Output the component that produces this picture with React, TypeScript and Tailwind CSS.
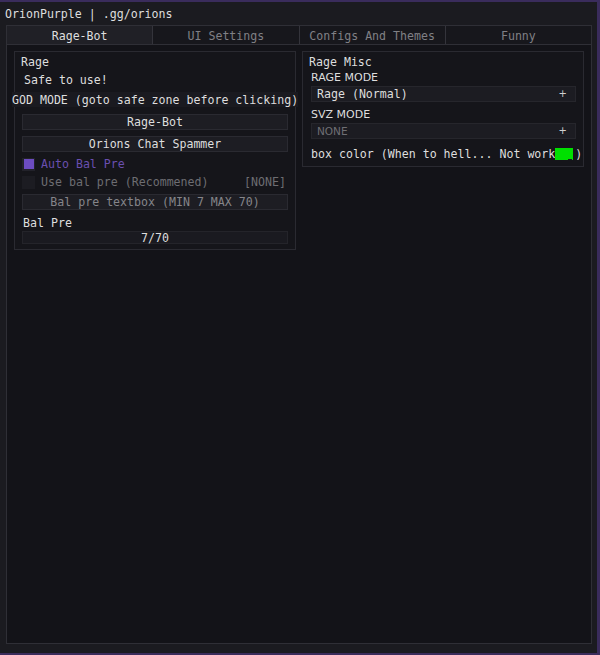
import React from "react";

const mono = { fontFamily: '"DejaVu Sans Mono", "Liberation Mono", monospace' };
const sans = { fontFamily: '"DejaVu Sans", "Liberation Sans", sans-serif' };

function Tab({ label, active }: { label: string; active?: boolean }) {
    return <div className={"flex-1 flex items-center justify-center pt-[1px] border-r border-[#34343b] last:border-r-0 " + (active ? "bg-[#202026] text-[#dedede]" : "bg-[#17171c] text-[#808085]")}>
        {label}
    </div>
}

function Button({ text, dim }: { text: string; dim?: boolean }) {
    return <div className={"h-[16px] mx-[7px] flex items-center justify-center bg-[#1d1d23] border border-[#2a2a31] " + (dim ? "text-[#85858a]" : "text-[#dedede]")}>
        {text}
    </div>
}

function Combo({ text, dim }: { text: string; dim?: boolean }) {
    return <div className="h-[16px] ml-[8px] mr-[7px] mt-[2px] flex items-center justify-between bg-[#1c1c22] border border-[#26262c] pl-[5px] pr-[8px]">
        <span className={dim ? "text-[#6f6f74] text-[10.5px]" : "text-[#dedede]"} style={dim ? sans : mono}>{text}</span>
        <span className="text-[#d0d0d0] text-[10px]" style={sans}>+</span>
    </div>
}

export default function App() {
    return <div className="w-[600px] h-[655px] bg-[#1b1b20] border-t-2 border-r-[3px] border-b-2 border-[#3a2c5c] flex flex-col text-[11.6px] leading-[14px] text-[#dedede]" style={mono}>
        <div className="h-[23px] pl-[5px] flex items-center">OrionPurple | .gg/orions</div>

        <div className="flex-1 ml-[6px] mr-[5px] mb-[9px] border border-[#2f2f36] bg-[#131318] flex flex-col">
            <div className="h-[19px] flex border-b border-[#2f2f36]">
                <Tab label="Rage-Bot" active />
                <Tab label="UI Settings" />
                <Tab label="Configs And Themes" />
                <Tab label="Funny" />
            </div>

            <div className="flex gap-[6px] pl-[7px] pt-[6px] items-start">
                {/* left group */}
                <div className="w-[282px] border border-[#2a2a31] bg-[#15151a] pb-[5px]">
                    <div className="h-[14px] mt-[3px] pl-[6px]">Rage</div>
                    <div className="h-[14px] mt-[4px] pl-[9px]">Safe to use!</div>
                    <div className="h-[15px] mt-[5px] -ml-[3px] whitespace-nowrap flex items-center bg-[#1a1a20] w-[286px]">GOD MODE (goto safe zone before clicking)</div>
                    <div className="mt-[7px]"><Button text="Rage-Bot" /></div>
                    <div className="mt-[6px]"><Button text="Orions Chat Spammer" /></div>
                    <div className="mt-[5px] ml-[7px] h-[14px] flex items-center gap-[6px]">
                        <div className="w-[13px] h-[13px] bg-[#22222a] flex items-center justify-center">
                            <div className="w-[10px] h-[10px] bg-[#6c4cc0]"></div>
                        </div>
                        <span className="text-[#6a4fb0]">Auto Bal Pre</span>
                    </div>
                    <div className="mt-[4px] ml-[7px] mr-[9px] h-[14px] flex items-center gap-[6px]">
                        <div className="w-[13px] h-[13px] bg-[#1c1c22]"></div>
                        <span className="text-[#6d6d72] flex-1">Use bal pre (Recommened)</span>
                        <span className="text-[#6d6d72]">[NONE]</span>
                    </div>
                    <div className="mt-[5px]"><Button text="Bal pre textbox (MIN 7 MAX 70)" dim /></div>
                    <div className="h-[14px] mt-[6px] pl-[8px]">Bal Pre</div>
                    <div className="h-[13px] mt-[1px] mx-[7px] bg-[#1a1a20] border border-[#24242a] flex items-center justify-center">7/70</div>
                </div>

                {/* right group */}
                <div className="w-[282px] border border-[#2a2a31] bg-[#15151a] pb-[5px]">
                    <div className="h-[14px] mt-[3px] pl-[6px]">Rage Misc</div>
                    <div className="h-[14px] mt-[1px] pt-[2px] pl-[8px] text-[11px] leading-[12px]" style={sans}>RAGE MODE</div>
                    <Combo text="Rage (Normal)" />
                    <div className="h-[14px] mt-[5px] pt-[2px] pl-[8px] text-[11px] leading-[12px]" style={sans}>SVZ MODE</div>
                    <Combo text="NONE" dim />
                    <div className="h-[14px] mt-[8px] pl-[8px] flex items-center whitespace-nowrap">
                        <span>box color (When to hell... Not work</span>
                        <span className="w-[18px] h-[12px] bg-[#00e000] relative">
                            <span className="absolute right-[1px] bottom-[0px] w-[4px] h-[1px] bg-[#1c1c20]"></span>
                        </span>
                        <span className="ml-[2px]">)</span>
                    </div>
                </div>
            </div>
        </div>
    </div>
}
